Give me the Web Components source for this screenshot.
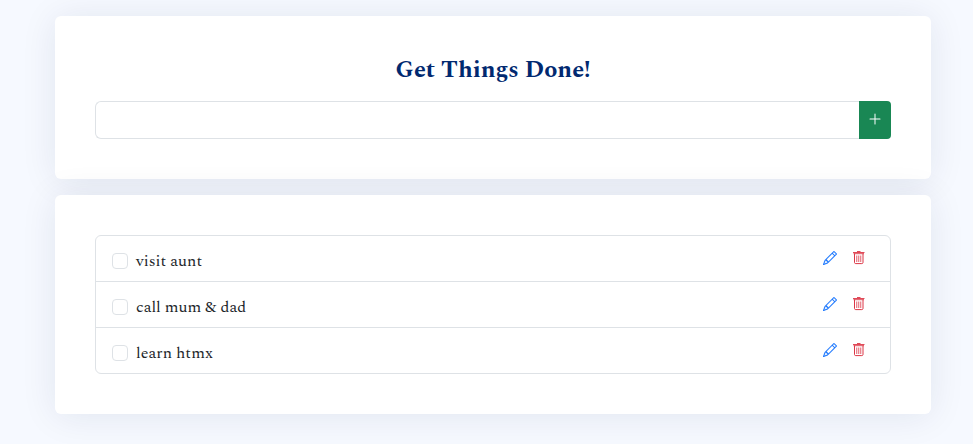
<!DOCTYPE html>
<html lang="en">
<head>
<meta charset="utf-8">
<meta name="viewport" content="width=device-width, initial-scale=1">
<title>Get Things Done!</title>
<style>
  body {
    margin: 0;
    background: #f6f9ff;
    color: #212529;
    font-family: Spectral, "Liberation Serif", serif;
    font-size: 16px;
    line-height: 24px;
    --border: #dee2e6;
    --heading: #012970;
    --success: #198754;
    --primary: #0d6efd;
    --danger: #dc3545;
  }
</style>
</head>
<body>
<todo-page>
  <todo-card>
    <todo-form heading="Get Things Done!"></todo-form>
  </todo-card>
  <todo-card>
    <todo-list>
      <todo-item>visit aunt</todo-item>
      <todo-item>call mum &amp; dad</todo-item>
      <todo-item>learn htmx</todo-item>
    </todo-list>
  </todo-card>
</todo-page>

<script>
  class BaseElement extends HTMLElement {
    constructor() {
      super();
      this.attachShadow({ mode: "open" }).innerHTML =
        "<style>*{box-sizing:border-box}</style>" + this.constructor.markup;
    }
  }

  customElements.define("todo-page", class extends BaseElement {
    static markup = `
      <style>
        :host { display: block; }
        main { display: flex; flex-direction: column; gap: 16px; padding: 16px 42px 30px 55px; }
      </style>
      <main><slot></slot></main>`;
  });

  customElements.define("todo-card", class extends BaseElement {
    static markup = `
      <style>
        :host {
          display: block;
          padding: 40px;
          background: #fff;
          border-radius: 6px;
          box-shadow: 0 2px 36px rgba(8, 28, 82, .09);
        }
      </style>
      <slot></slot>`;
  });

  customElements.define("todo-form", class extends BaseElement {
    static markup = `
      <style>
        :host { display: block; }
        h1 {
          margin: 0 0 16px;
          color: var(--heading);
          font-size: 24px;
          line-height: 29px;
          font-weight: 700;
          text-align: center;
        }
        form { display: flex; height: 38px; margin: 0; }
        input {
          flex: 1;
          min-width: 0;
          padding: 6px 12px;
          border: 1px solid var(--border);
          border-right: 0;
          border-radius: 6px 0 0 6px;
          background: #fff;
          color: inherit;
          font: inherit;
        }
        button {
          display: flex;
          align-items: center;
          justify-content: center;
          width: 32px;
          padding: 0 0 2px;
          border: 0;
          border-radius: 0 4px 4px 0;
          background: var(--success);
          color: #fff;
        }
      </style>
      <h1></h1>
      <form>
        <input type="text" aria-label="New task">
        <button type="button" aria-label="Add task">
          <svg width="16" height="16" viewBox="0 0 16 16" fill="currentColor" aria-hidden="true">
            <path d="M8 2.5a.5.5 0 0 1 .5.5v4.5H13a.5.5 0 0 1 0 1H8.500V13a.5.5 0 0 1-1 0V8.500H3a.5.5 0 0 1 0-1h4.500V3a.5.5 0 0 1 .5-.5"/>
          </svg>
        </button>
      </form>`;
    connectedCallback() {
      this.shadowRoot.querySelector("h1").textContent = this.getAttribute("heading");
    }
  });

  customElements.define("todo-list", class extends BaseElement {
    static markup = `
      <style>
        :host { display: block; border: 1px solid var(--border); border-radius: 6px; }
        ::slotted(:not(:last-child)) { border-bottom: 1px solid var(--border); }
      </style>
      <slot></slot>`;
  });

  customElements.define("todo-item", class extends BaseElement {
    static markup = `
      <style>
        :host { display: flex; justify-content: space-between; align-items: flex-start; padding: 8px 16px; }
        label { display: flex; align-items: center; gap: 8px; padding: 5px 0 0; }
        input {
          appearance: none;
          width: 16px;
          height: 16px;
          margin: 0;
          border: 1px solid var(--border);
          border-radius: 4px;
          background: #fff;
        }
        input:checked { background: var(--primary); }
        .actions { display: flex; }
        button {
          display: flex;
          padding: 7px 8px 6px 7px;
          border: 0;
          background: none;
        }
        .edit { color: var(--primary); }
        .delete { color: var(--danger); }
        svg { display: block; }
      </style>
      <label><input type="checkbox"><span><slot></slot></span></label>
      <div class="actions">
        <button class="edit" type="button" aria-label="Edit task">
          <svg width="14" height="14" viewBox="0 0 16 16" fill="currentColor" stroke="currentColor" stroke-width=".2" aria-hidden="true">
            <path d="M12.146.146a.5.5 0 0 1 .708 0l3 3a.5.5 0 0 1 0 .708l-10 10a.5.5 0 0 1-.168.11l-5 2a.5.5 0 0 1-.65-.65l2-5a.5.5 0 0 1 .11-.168zM11.207 2.500 13.500 4.793 14.793 3.500 12.500 1.207zm1.586 3L10.500 3.207 4 9.707V10h.5a.5.5 0 0 1 .5.5v.5h.5a.5.5 0 0 1 .5.5v.5h.293zm-9.761 5.175-.106.106-1.528 3.821 3.821-1.528.106-.106A.5.5 0 0 1 5 12.500V12h-.5a.5.5 0 0 1-.5-.5V11h-.5a.5.5 0 0 1-.468-.325"/>
          </svg>
        </button>
        <button class="delete" type="button" aria-label="Delete task">
          <svg width="14" height="14" viewBox="0 0 14 14" fill="none" stroke="currentColor" aria-hidden="true">
            <path d="M1 1.500h11.500M1.500 2.700h10.500M5 .5h3.500" stroke-width=".9"/>
            <path d="M2.500 2.500V11.500a1.200 1.200 0 0 0 1.200 1.100h6.100a1.200 1.200 0 0 0 1.200-1.100V2.500"/>
            <path d="M4.750 4.500v6.500M6.750 4.500v6.500M8.750 4.500v6.500" stroke-width=".8"/>
          </svg>
        </button>
      </div>`;
  });
</script>
</body>
</html>
